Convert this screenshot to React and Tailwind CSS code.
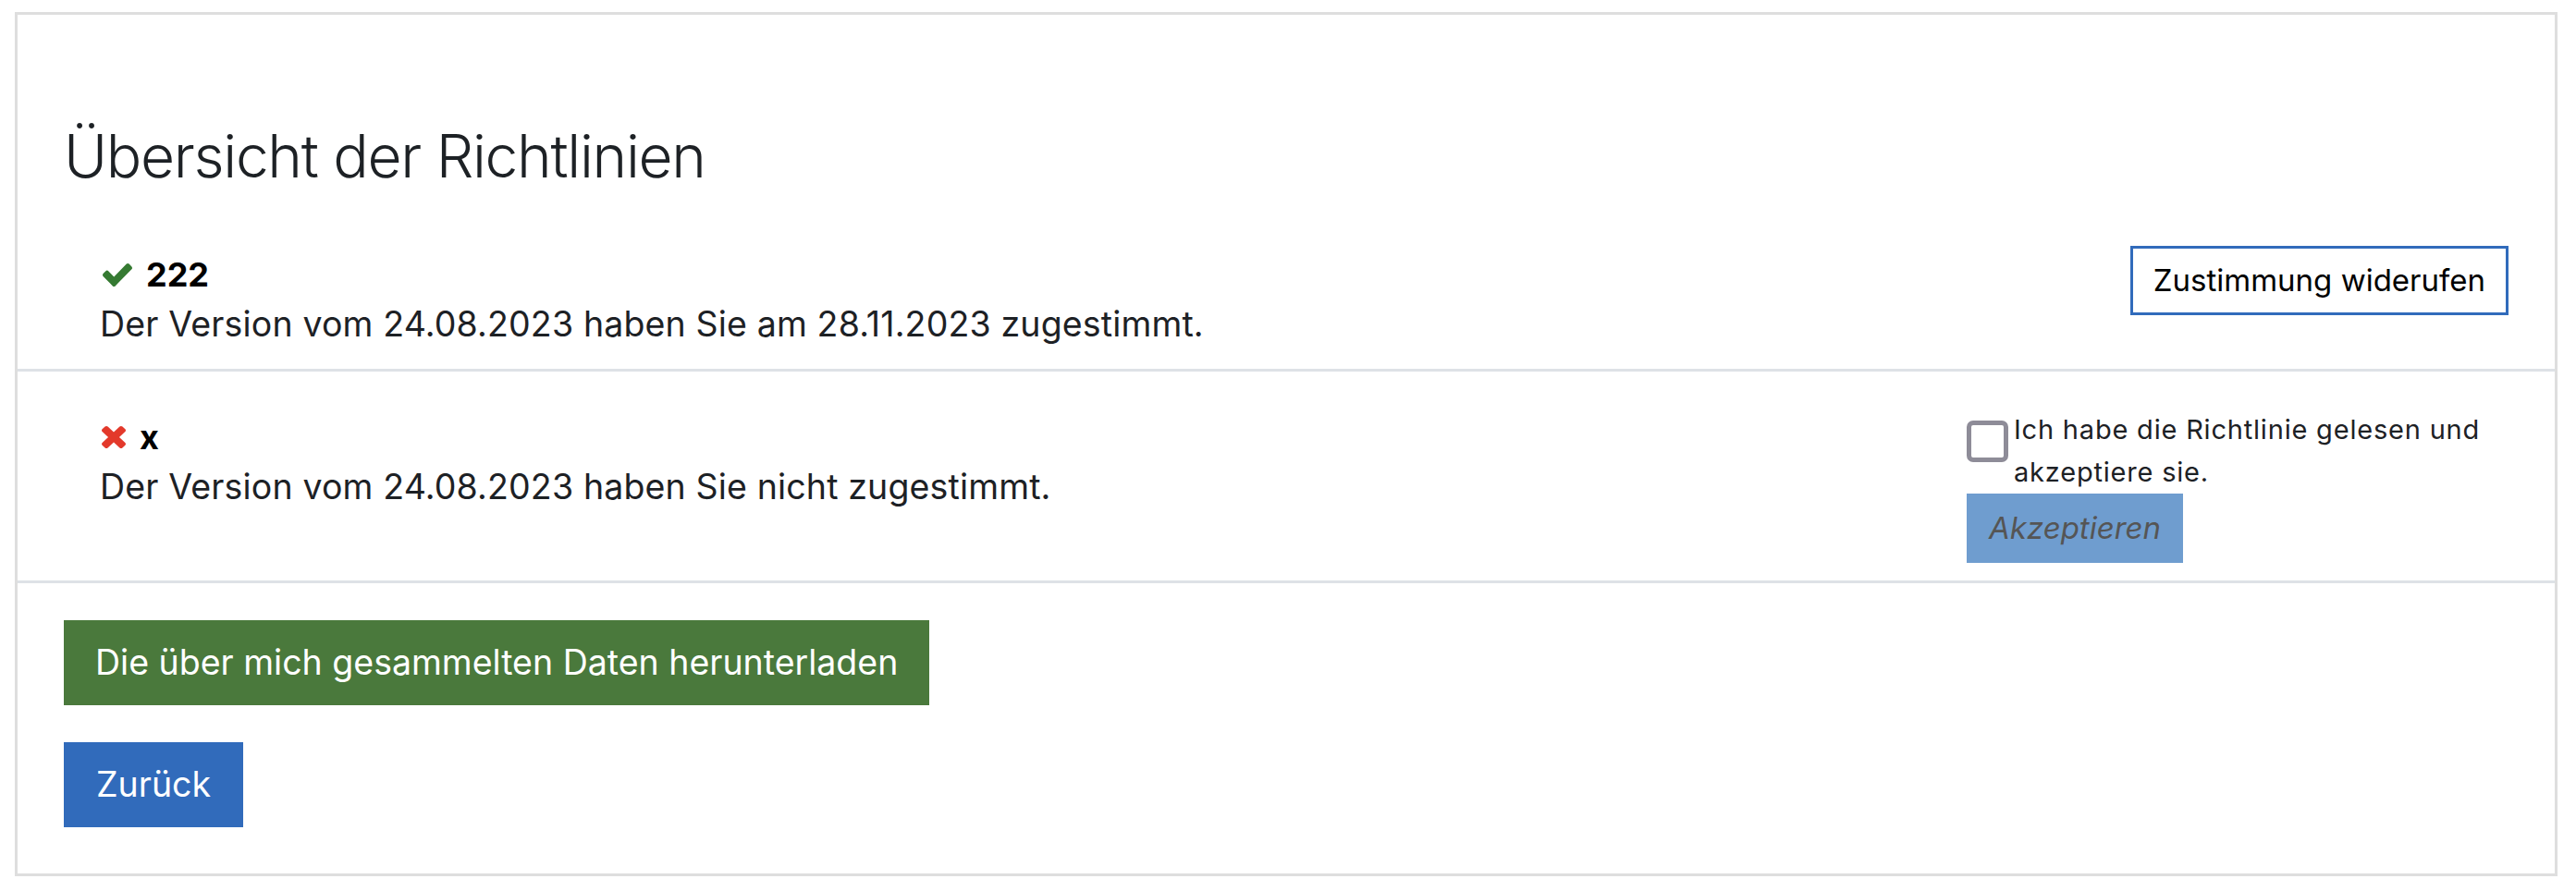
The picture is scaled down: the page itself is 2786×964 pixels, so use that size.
import React from 'react';

// Font Awesome 4 style glyphs, drawn inline
const CheckIcon = ({ className }) => (
  <svg viewBox="121 334 1550 1188" className={className} preserveAspectRatio="none" fill="currentColor">
    <path d="M1671 566q0 40-28 68l-724 724-136 136q-28 28-68 28t-68-28l-136-136-362-362q-28-28-28-68t28-68l136-136q28-28 68-28t68 28l294 295 656-657q28-28 68-28t68 28l136 136q28 28 28 68z" />
  </svg>
);

const TimesIcon = ({ className }) => (
  <svg viewBox="110 366 1188 1188" className={className} preserveAspectRatio="none" fill="currentColor">
    <path d="M1298 1322q0 40-28 68l-136 136q-28 28-68 28t-68-28l-294-294-294 294q-28 28-68 28t-68-28l-136-136q-28-28-28-68t28-68l294-294-294-294q-28-28-28-68t28-68l136-136q28-28 68-28t68 28l294 294 294-294q28-28 68-28t68 28l136 136q28 28 28 68t-28 68l-294 294 294 294q28 28 28 68z" />
  </svg>
);

const policies = [
  { id: 1, name: '222', accepted: true, text: 'Der Version vom 24.08.2023 haben Sie am 28.11.2023 zugestimmt.' },
  { id: 2, name: 'x', accepted: false, text: 'Der Version vom 24.08.2023 haben Sie nicht zugestimmt.' },
];

const PolicyRow = ({ policy }) => (
  <div className="flex justify-between items-start pt-[40px] pb-[19px] pl-[89px] pr-[50px] border-b-[3px] border-[#dee2e6]">
    <div className="mt-[6px]">
      <div className="flex items-center h-[50px]">
        {policy.accepted ? (
          <CheckIcon className="w-[32px] h-[25px] ml-[3px] mr-[15px] text-[#357a32]" />
        ) : (
          <TimesIcon className="w-[26px] h-[24px] ml-[2px] mr-[15px] text-[#e3392b]" />
        )}
        <span className="text-[36px] font-bold text-black">{policy.name}</span>
      </div>
      <p className="h-[58px] leading-[58px] text-[37.5px] tracking-[0.15px] text-[#1d2125]">{policy.text}</p>
    </div>

    {policy.accepted ? (
      <button className="h-[75px] px-[22px] border-[3px] border-[#316bbb] bg-white text-[33px] text-black">
        Zustimmung widerufen
      </button>
    ) : (
      <div className="w-[586px] flex flex-col items-start">
        <label className="flex items-start">
          <span className="shrink-0 w-[45px] h-[45px] mt-[13px] mr-[6px] border-[5px] border-[#8e8c98] rounded-[7px] bg-white" />
          <span className="text-[29px] leading-[46px] tracking-[0.8px] text-[#1d2125]">
            Ich habe die Richtlinie gelesen und akzeptiere sie.
          </span>
        </label>
        <button className="h-[75px] px-[24px] bg-[#6f9dcf] text-[33px] italic text-[#555]">
          Akzeptieren
        </button>
      </div>
    )}
  </div>
);

export default function App() {
  return (
    <div className="min-h-screen bg-white pt-[13px] pl-[16px] font-['Inter','Noto_Sans',sans-serif]">
      <div className="w-[2750px] border-[3px] border-[#dedede] bg-white">
        <h2 className="pt-[114px] px-[50px] mb-[18px] text-[64px] leading-[78px] tracking-[-1.3px] font-light text-[#1d2125]">
          Übersicht der Richtlinien
        </h2>

        {policies.map((p) => (
          <PolicyRow key={p.id} policy={p} />
        ))}

        <div className="flex flex-col items-start gap-[40px] pt-[40px] pb-[50px] px-[50px]">
          <button className="h-[92px] px-[34px] bg-[#4a793c] text-[37.5px] text-white">
            Die über mich gesammelten Daten herunterladen
          </button>
          <button className="h-[92px] px-[35px] bg-[#316bbb] text-[37.5px] text-white">
            Zurück
          </button>
        </div>
      </div>
    </div>
  );
}
